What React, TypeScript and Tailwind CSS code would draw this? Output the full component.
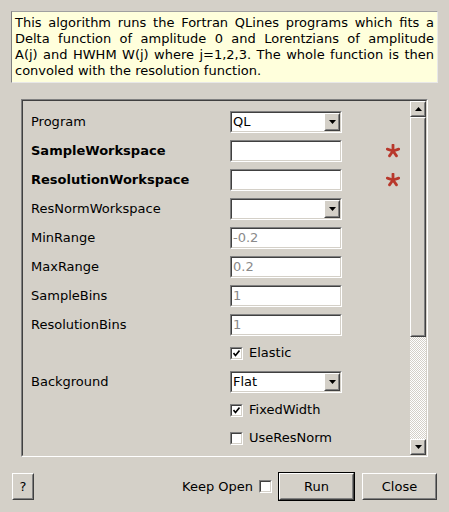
import React from 'react';

const font = 'font-["DejaVu_Sans",sans-serif]';

// sunken 2px frame: outer gray/white, inner black/light
const Sunken: React.FC<{ className?: string; children?: React.ReactNode }> = ({ className = '', children }) => (
    <div className={`border border-t-[#808080] border-l-[#808080] border-b-white border-r-white ${className}`}>
        <div className="h-full w-full border border-t-[#404040] border-l-[#404040] border-b-[#d4d0c8] border-r-[#d4d0c8]">
            {children}
        </div>
    </div>
);

const Raised: React.FC<{ className?: string; children?: React.ReactNode }> = ({ className = '', children }) => (
    <div className={`border border-t-white border-l-white border-b-[#404040] border-r-[#404040] bg-[#d4d0c8] ${className}`}>
        <div className="flex h-full w-full items-center justify-center border border-t-[#d4d0c8] border-l-[#d4d0c8] border-b-[#808080] border-r-[#808080]">
            {children}
        </div>
    </div>
);

const Arrow: React.FC<{ up?: boolean }> = ({ up }) => (
    <svg width="7" height="4" viewBox="0 0 7 4">
        {up ? <polygon points="0,4 7,4 3.5,0" fill="#000" /> : <polygon points="0,0 7,0 3.5,4" fill="#000" />}
    </svg>
);

const TextBox: React.FC<{ value?: string }> = ({ value }) => (
    <Sunken className="h-[22px] w-[112px] bg-white">
        <div className="flex h-full items-center bg-white pl-[1px] text-[13px] text-[#8a8a8a]">{value}</div>
    </Sunken>
);

const Combo: React.FC<{ value?: string }> = ({ value }) => (
    <Sunken className="h-[22px] w-[112px] bg-white">
        <div className="flex h-full items-center bg-white">
            <span className="flex-1 pl-[1px] text-[13px] text-black">{value}</span>
            <Raised className="h-[18px] w-[16px]">
                <Arrow />
            </Raised>
        </div>
    </Sunken>
);

const Check: React.FC<{ checked?: boolean }> = ({ checked }) => (
    <Sunken className="h-[13px] w-[13px] bg-white">
        <div className="flex h-full items-center justify-center bg-white">
            {checked && (
                <svg width="7" height="7" viewBox="0 0 7 7">
                    <path d="M0.5 3 L2.5 5.5 L6.5 0.5" stroke="#000" strokeWidth="1.6" fill="none" />
                </svg>
            )}
        </div>
    </Sunken>
);

const Star = () => (
    <svg width="14" height="14" viewBox="-7 -7 14 14">
        {[0, 72, 144, 216, 288].map((a) => (
            <line
                key={a}
                x1="0"
                y1="0"
                x2={6 * Math.sin((a * Math.PI) / 180)}
                y2={-6 * Math.cos((a * Math.PI) / 180)}
                stroke="#b8382c"
                strokeWidth="2.8"
                strokeLinecap="round"
            />
        ))}
    </svg>
);

type Row =
    | { kind: 'text'; label: string; bold?: boolean; value?: string; required?: boolean }
    | { kind: 'combo'; label: string; value?: string }
    | { kind: 'check'; label: string; checked: boolean };

const rows: Row[] = [
    { kind: 'combo', label: 'Program', value: 'QL' },
    { kind: 'text', label: 'SampleWorkspace', bold: true, required: true },
    { kind: 'text', label: 'ResolutionWorkspace', bold: true, required: true },
    { kind: 'combo', label: 'ResNormWorkspace' },
    { kind: 'text', label: 'MinRange', value: '-0.2' },
    { kind: 'text', label: 'MaxRange', value: '0.2' },
    { kind: 'text', label: 'SampleBins', value: '1' },
    { kind: 'text', label: 'ResolutionBins', value: '1' },
    { kind: 'check', label: 'Elastic', checked: true },
    { kind: 'combo', label: 'Background', value: 'Flat' },
    { kind: 'check', label: 'FixedWidth', checked: true },
    { kind: 'check', label: 'UseResNorm', checked: false },
];

const descLines = [
    'This algorithm runs the Fortran QLines programs which fits a',
    'Delta function of amplitude 0 and Lorentzians of amplitude',
    'A(j) and HWHM W(j) where j=1,2,3. The whole function is then',
    'convoled with the resolution function.',
];

export default function App() {
    return (
        <div className={`flex h-[512px] w-[449px] flex-col bg-[#d4d0c8] text-black ${font}`}>
            {/* description */}
            <div className="mx-[11px] mt-[11px] h-[72px] border border-t-[#a0a0a0] border-l-[#808080] border-b-[#e8e8e8] border-r-[#e8e8e8] bg-[#ffffdc] px-[3px] pt-[3px] text-[13px] leading-[16px]">
                {descLines.map((l, i) => (
                    <div key={i} className={`whitespace-nowrap ${i < 3 ? 'text-justify [text-align-last:justify]' : ''}`}>
                        {l}
                    </div>
                ))}
            </div>

            {/* properties */}
            <Sunken className="mx-[21px] ml-[21px] mt-[16px] h-[358px] w-[407px]">
                <div className="flex h-full bg-[#d4d0c8]">
                    <div className="flex-1 pl-[8px] pt-[6px]">
                        {rows.map((r) => (
                            <div key={r.label} className={`flex items-center ${r.kind === 'check' ? 'h-[28px]' : 'h-[29px]'}`}>
                                <div className={`w-[199px] text-[13px] ${r.kind === 'text' && r.bold ? 'font-bold' : ''}`}>
                                    {r.kind === 'check' ? '' : r.label}
                                </div>
                                {r.kind === 'text' && <TextBox value={r.value} />}
                                {r.kind === 'combo' && <Combo value={r.value} />}
                                {r.kind === 'check' && (
                                    <div className="flex items-center gap-[6px] text-[13px]">
                                        <Check checked={r.checked} />
                                        <span>{r.label}</span>
                                    </div>
                                )}
                                {r.kind === 'text' && r.required && (
                                    <div className="ml-[44px] flex items-center">
                                        <Star />
                                    </div>
                                )}
                            </div>
                        ))}
                    </div>
                    {/* scrollbar */}
                    <div className="flex w-[16px] flex-col">
                        <Raised className="h-[16px]">
                            <Arrow up />
                        </Raised>
                        <Raised className="h-[220px]" />
                        <div className="flex-1 bg-[repeating-conic-gradient(#d4d0c8_0%_25%,#ffffff_0%_50%)] bg-[length:2px_2px]" />
                        <Raised className="h-[16px]">
                            <Arrow />
                        </Raised>
                    </div>
                </div>
            </Sunken>

            {/* buttons */}
            <div className="mt-[15px] flex items-center pl-[12px] pr-[12px] text-[13px]">
                <Raised className="h-[27px] w-[22px]">?</Raised>
                <div className="flex-1" />
                <span>Keep Open</span>
                <div className="ml-[6px] mr-[6px]">
                    <Check checked={false} />
                </div>
                <div className="border border-black">
                    <Raised className="h-[27px] w-[75px]">Run</Raised>
                </div>
                <Raised className="ml-[7px] h-[27px] w-[75px]">Close</Raised>
            </div>
        </div>
    );
}
